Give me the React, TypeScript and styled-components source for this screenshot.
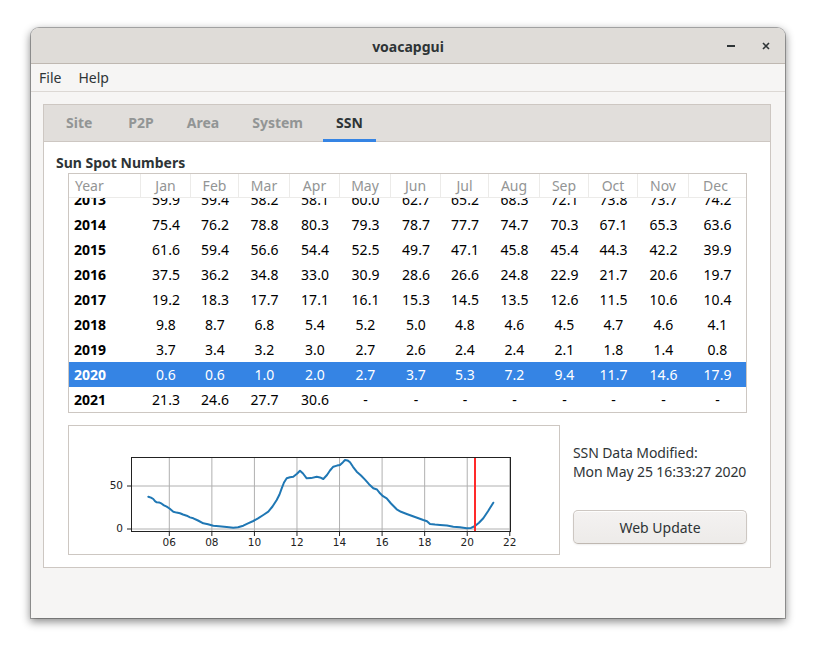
import React, { useLayoutEffect, useRef } from "react";
import styled, { createGlobalStyle } from "styled-components";

const GlobalStyle = createGlobalStyle`
  html, body {
    margin: 0;
    padding: 0;
    background: #ffffff;
  }
  body {
    font-family: "Noto Sans", "DejaVu Sans", sans-serif;
    font-size: 14px;
    color: #2e3436;
  }
  * {
    box-sizing: border-box;
  }
`;

const MONTHS = ["Jan", "Feb", "Mar", "Apr", "May", "Jun", "Jul", "Aug", "Sep", "Oct", "Nov", "Dec"];
const COLUMNS = "72px 50px 48px 51px 50px 51px 50px 48px 51px 49px 49px 51px 1fr";
const SELECTED_YEAR = 2020;

const SSN_ROWS = [
	{ year: 2012, values: ["65.5", "66.9", "66.8", "64.6", "61.7", "58.9", "57.8", "58.2", "58.1", "58.6", "59.7", "59.6"] },
	{ year: 2013, values: ["59.9", "59.4", "58.2", "58.1", "60.0", "62.7", "65.2", "68.3", "72.1", "73.8", "73.7", "74.2"] },
	{ year: 2014, values: ["75.4", "76.2", "78.8", "80.3", "79.3", "78.7", "77.7", "74.7", "70.3", "67.1", "65.3", "63.6"] },
	{ year: 2015, values: ["61.6", "59.4", "56.6", "54.4", "52.5", "49.7", "47.1", "45.8", "45.4", "44.3", "42.2", "39.9"] },
	{ year: 2016, values: ["37.5", "36.2", "34.8", "33.0", "30.9", "28.6", "26.6", "24.8", "22.9", "21.7", "20.6", "19.7"] },
	{ year: 2017, values: ["19.2", "18.3", "17.7", "17.1", "16.1", "15.3", "14.5", "13.5", "12.6", "11.5", "10.6", "10.4"] },
	{ year: 2018, values: ["9.8", "8.7", "6.8", "5.4", "5.2", "5.0", "4.8", "4.6", "4.5", "4.7", "4.6", "4.1"] },
	{ year: 2019, values: ["3.7", "3.4", "3.2", "3.0", "2.7", "2.6", "2.4", "2.4", "2.1", "1.8", "1.4", "0.8"] },
	{ year: 2020, values: ["0.6", "0.6", "1.0", "2.0", "2.7", "3.7", "5.3", "7.2", "9.4", "11.7", "14.6", "17.9"] },
	{ year: 2021, values: ["21.3", "24.6", "27.7", "30.6", "-", "-", "-", "-", "-", "-", "-", "-"] },
];

const TABS = ["Site", "P2P", "Area", "System", "SSN"];

// smoothed ssn curve, already in chart coordinates
const CURVE = [
	[79.3, 70.7], [82, 71.6], [84.3, 73], [86, 75.2], [87.7, 76.3], [90, 76.4], [92.7, 77.7],
	[95, 79.4], [97.7, 80.7], [100.5, 82.5], [104.3, 85.7], [107.5, 86.6], [111, 87.3],
	[114, 88.5], [117.7, 89.7], [121, 91.4], [124.3, 92.3], [129, 94.5], [134.3, 97.3],
	[139, 98.2], [144.3, 99.7], [150, 100.2], [157.7, 101], [164.3, 101.7], [169, 101.3],
	[174.3, 99.7], [179, 97.4], [184.3, 95], [189, 92.4], [194.3, 89], [199.3, 85.7],
	[203.5, 80.5], [207.7, 74], [210.5, 68.5], [212.7, 62.3], [215, 56.5], [217.7, 52.3],
	[221, 51.2], [224.3, 50.7], [228, 47.8], [231, 44.7], [234, 47.5], [237.7, 52.3],
	[242, 52.1], [247.7, 50.7], [251, 51.4], [254.3, 53], [258, 49], [261, 44.5],
	[264.3, 40.7], [268, 39.6], [271, 39], [274, 36.2], [276, 34], [278.5, 34.4],
	[281, 36.3], [284, 40.8], [287.7, 45.7], [292, 49.5], [296, 53.6], [300, 58.2],
	[304.3, 62.3], [308, 63.5], [311, 67.3], [314, 70.2], [317.7, 72.3], [322, 77.5],
	[327.7, 83.3], [332, 85.8], [337.7, 88], [346, 91], [354.3, 94], [358, 95.2],
	[361, 98], [366, 98.6], [371, 99], [378, 99.6], [384.3, 100.7], [391, 101.3],
	[397.7, 102.3], [402, 101.9], [406, 100], [410, 96.8], [414.3, 92.3], [419, 85.2],
	[424.3, 76.7],
];

const X_TICKS = ["06", "08", "10", "12", "14", "16", "18", "20", "22"];
const xOf = (year: number) => 100.3 + (year - 6) * 21.28;
const yOf = (value: number) => 103 - value * 0.86;

const SsnChart = () => {
	const left = 62;
	const right = 442;
	const top = 31;
	const bottom = 106;
	return (
		<svg width="490" height="128" viewBox="0 0 490 128">
			{X_TICKS.map((t) => {
				const x = xOf(parseInt(t, 10));
				return (
					<g key={t}>
						<line x1={x} y1={top} x2={x} y2={bottom} stroke="#b0b0b0" strokeWidth="1" />
						<line x1={x} y1={bottom} x2={x} y2={bottom + 4} stroke="#222" strokeWidth="1" />
						<text
							x={x}
							y={117}
							textAnchor="middle"
							dominantBaseline="middle"
							fontFamily="'DejaVu Sans', sans-serif"
							fontSize="10.5"
							fill="#222"
						>
							{t}
						</text>
					</g>
				);
			})}
			{[0, 50].map((v) => (
				<g key={v}>
					<line x1={left} y1={yOf(v)} x2={right} y2={yOf(v)} stroke="#b0b0b0" strokeWidth="1" />
					<line x1={left - 4} y1={yOf(v)} x2={left} y2={yOf(v)} stroke="#222" strokeWidth="1" />
					<text
						x={54}
						y={yOf(v)}
						textAnchor="end"
						dominantBaseline="middle"
						fontFamily="'DejaVu Sans', sans-serif"
						fontSize="10.5"
						fill="#222"
					>
						{v}
					</text>
				</g>
			))}
			<polyline
				points={CURVE.map((p) => p.join(",")).join(" ")}
				fill="none"
				stroke="#1f77b4"
				strokeWidth="2"
				strokeLinejoin="round"
				strokeLinecap="round"
			/>
			<line x1={406} y1={top} x2={406} y2={bottom} stroke="#ff2a2a" strokeWidth="2" />
			<rect
				x={left + 0.5}
				y={top + 0.5}
				width={right - left - 1}
				height={bottom - top - 1}
				fill="none"
				stroke="#222"
				strokeWidth="1"
			/>
		</svg>
	);
};

const App = () => {
	const scrollRef = useRef<HTMLDivElement>(null);

	useLayoutEffect(() => {
		if (scrollRef.current) {
			scrollRef.current.scrollTop = 36;
		}
	}, []);

	return (
		<>
			<GlobalStyle />
			<Screen>
				<Window>
					<TitleBar>
						<span />
						<Title>voacapgui</Title>
						<WinButtons>
							<WinButton>
								<svg width="10" height="10" viewBox="0 0 10 10">
									<rect x="1" y="4" width="8" height="2" fill="#2e3436" />
								</svg>
							</WinButton>
							<WinButton>
								<svg width="10" height="10" viewBox="0 0 10 10">
									<path d="M2 2 L8 8 M8 2 L2 8" stroke="#2e3436" strokeWidth="1.6" />
								</svg>
							</WinButton>
						</WinButtons>
					</TitleBar>
					<MenuBar>
						<MenuItem>File</MenuItem>
						<MenuItem>Help</MenuItem>
					</MenuBar>
					<Body>
						<Notebook>
							<TabBar>
								{TABS.map((t) => (
									<Tab key={t} $active={t === "SSN"}>
										{t}
									</Tab>
								))}
							</TabBar>
							<Page>
								<SectionLabel>Sun Spot Numbers</SectionLabel>
								<TableFrame>
									<TableScroll ref={scrollRef}>
										<HeadRow>
											<HeadCell $first>Year</HeadCell>
											{MONTHS.map((m, idx) => (
												<HeadCell key={m} $last={idx === MONTHS.length - 1}>
													{m}
												</HeadCell>
											))}
										</HeadRow>
										{SSN_ROWS.map((row) => (
											<Row key={row.year} $selected={row.year === SELECTED_YEAR}>
												<YearCell>{row.year}</YearCell>
												{row.values.map((v, idx) => (
													<Cell key={idx}>{v}</Cell>
												))}
											</Row>
										))}
									</TableScroll>
								</TableFrame>
								<BottomRow>
									<ChartFrame>
										<SsnChart />
									</ChartFrame>
									<InfoColumn>
										<InfoText>SSN Data Modified:</InfoText>
										<InfoText>Mon May 25 16:33:27 2020</InfoText>
										<UpdateButton>Web Update</UpdateButton>
									</InfoColumn>
								</BottomRow>
							</Page>
						</Notebook>
					</Body>
				</Window>
			</Screen>
		</>
	);
};

export default App;

const Screen = styled.div`
	width: 819px;
	height: 656px;
	padding: 28px 0 0 31px;
`;

const Window = styled.div`
	width: 754px;
	height: 590px;
	display: flex;
	flex-direction: column;
	background: #f6f5f4;
	border-radius: 8px 8px 0 0;
	overflow: hidden;
	box-shadow: 0 0 0 1px rgba(0, 0, 0, 0.28), 0 3px 9px 1px rgba(0, 0, 0, 0.45);
`;

const TitleBar = styled.div`
	height: 36px;
	flex: none;
	display: grid;
	grid-template-columns: 1fr auto 1fr;
	align-items: center;
	background: #dfdcd8;
	border-bottom: 1px solid #bfb8b1;
`;

const Title = styled.div`
	font-weight: 700;
	font-size: 14px;
	color: #2e3436;
	padding-top: 1px;
`;

const WinButtons = styled.div`
	display: flex;
	justify-content: flex-end;
	align-items: center;
	gap: 11px;
	padding-right: 7px;
`;

const WinButton = styled.div`
	width: 24px;
	height: 24px;
	display: flex;
	align-items: center;
	justify-content: center;
`;

const MenuBar = styled.div`
	height: 28px;
	flex: none;
	display: flex;
	align-items: center;
	gap: 17px;
	padding: 0 8px;
	border-bottom: 1px solid #dcd8d4;
	background: #f6f5f4;
`;

const MenuItem = styled.div`
	font-size: 14px;
	color: #2e3436;
	padding-bottom: 1px;
`;

const Body = styled.div`
	flex: 1;
	padding: 12px 14px 0 12px;
`;

const Notebook = styled.div`
	width: 728px;
	border: 1px solid #cdc7c2;
	background: #ffffff;
	display: flex;
	flex-direction: column;
`;

const TabBar = styled.div`
	height: 37px;
	display: flex;
	align-items: stretch;
	gap: 7px;
	padding-left: 9px;
	background: #e1dedb;
	border-bottom: 1px solid #cdc7c2;
`;

const Tab = styled.div<{ $active?: boolean }>`
	display: flex;
	align-items: center;
	padding: 1px 13px 0;
	margin-bottom: -1px;
	font-weight: 700;
	font-size: 14px;
	color: ${(p) => (p.$active ? "#2e3436" : "#929595")};
	border-bottom: 3px solid ${(p) => (p.$active ? "#3584e4" : "transparent")};
	&:first-child {
		margin-right: 3px;
	}
`;

const Page = styled.div`
	padding: 12px 12px 12px 12px;
	display: flex;
	flex-direction: column;
`;

const SectionLabel = styled.div`
	font-weight: 700;
	font-size: 14px;
	line-height: 17px;
	color: #2e3436;
	margin-bottom: 2px;
`;

const TableFrame = styled.div`
	margin: 0 11px 0 12px;
	height: 240px;
	border: 1px solid #cdc7c2;
	background: #ffffff;
`;

const TableScroll = styled.div`
	height: 100%;
	overflow: hidden;
`;

const HeadRow = styled.div`
	position: sticky;
	top: 0;
	z-index: 1;
	height: 24px;
	display: grid;
	grid-template-columns: ${COLUMNS};
	background: #ffffff;
	border-bottom: 1px solid #ecebe9;
`;

const HeadCell = styled.div<{ $first?: boolean; $last?: boolean }>`
	display: flex;
	align-items: center;
	justify-content: ${(p) => (p.$first ? "flex-start" : "center")};
	padding-left: ${(p) => (p.$first ? "6px" : "0")};
	padding-right: ${(p) => (p.$last ? "4px" : "0")};
	font-size: 14px;
	color: #939595;
	border-right: ${(p) => (p.$last ? "none" : "1px solid #ecebe9")};
`;

const Row = styled.div<{ $selected?: boolean }>`
	height: 25px;
	display: grid;
	grid-template-columns: ${COLUMNS};
	align-items: center;
	background: ${(p) => (p.$selected ? "#3584e4" : "#ffffff")};
	color: ${(p) => (p.$selected ? "#ffffff" : "#000000")};
`;

const YearCell = styled.div`
	padding-left: 5px;
	font-weight: 700;
	font-size: 14px;
`;

const Cell = styled.div`
	text-align: center;
	font-size: 14px;
`;

const BottomRow = styled.div`
	display: grid;
	grid-template-columns: 492px 1fr;
	gap: 13px;
	margin: 12px 11px 0 12px;
`;

const ChartFrame = styled.div`
	height: 130px;
	border: 1px solid #cdc7c2;
	background: #ffffff;
	svg {
		display: block;
	}
`;

const InfoColumn = styled.div`
	display: flex;
	flex-direction: column;
	padding-top: 18px;
`;

const InfoText = styled.div`
	font-size: 14px;
	line-height: 19px;
	color: #2e3436;
	white-space: nowrap;
	letter-spacing: -0.1px;
`;

const UpdateButton = styled.button`
	margin-top: 29px;
	height: 34px;
	width: 100%;
	border: 1px solid #cdc7c2;
	border-bottom-color: #bfb8b1;
	border-radius: 5px;
	background: linear-gradient(to bottom, #f4f2f1, #edebe9);
	box-shadow: inset 0 1px rgba(255, 255, 255, 0.8), 0 1px 2px rgba(0, 0, 0, 0.07);
	font-family: "Noto Sans", "DejaVu Sans", sans-serif;
	font-size: 14px;
	color: #2e3436;
	padding: 0;
`;
